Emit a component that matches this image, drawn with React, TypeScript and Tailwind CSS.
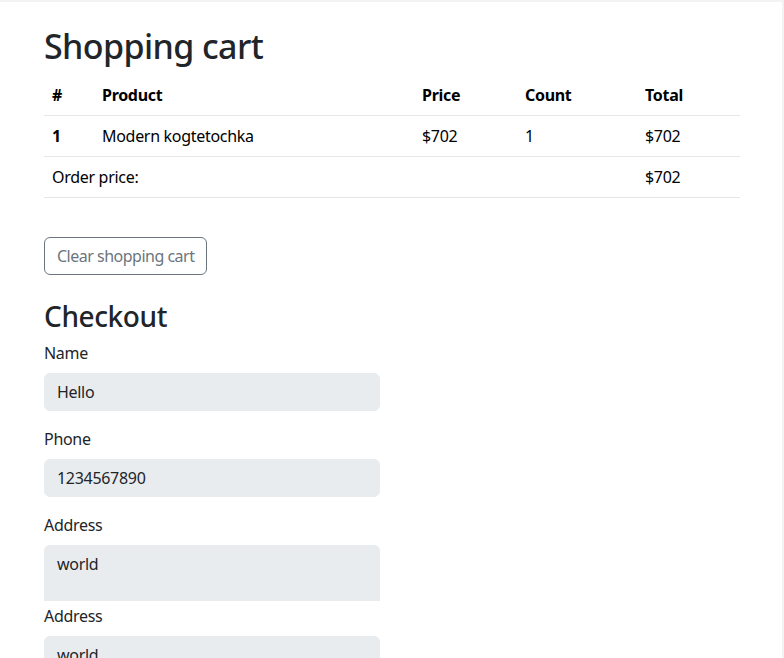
import React from "react";

export default function App() {
  const font = "font-['Noto_Sans',sans-serif]";
  return (
    <div className={`min-h-[658px] w-full border-t-2 border-r-2 border-[#f3f3f3] bg-white text-[#212529] ${font}`}>
      <div className="ml-[44px] w-[696px]">
        <h1 className="mt-[24px] mb-[8px] text-[34px] leading-[41px] font-medium tracking-[-0.6px]">Shopping cart</h1>
        <table className="w-[696px] table-fixed border-collapse text-[16px] leading-6 tracking-[-0.3px]">
          <colgroup>
            <col className="w-[50px]" />
            <col className="w-[320px]" />
            <col className="w-[103px]" />
            <col className="w-[120px]" />
            <col className="w-[103px]" />
          </colgroup>
          <thead>
            <tr className="border-b border-[#e5e7ea]">
              <th className="px-2 py-2 text-left font-bold text-black">#</th>
              <th className="px-2 py-2 text-left font-bold text-black">Product</th>
              <th className="px-2 py-2 text-left font-bold text-black">Price</th>
              <th className="px-2 py-2 text-left font-bold text-black">Count</th>
              <th className="px-2 py-2 text-left font-bold text-black">Total</th>
            </tr>
          </thead>
          <tbody>
            <tr className="border-b border-[#e5e7ea]">
              <td className="px-2 py-2 font-bold text-black">1</td>
              <td className="px-2 py-2 text-black">Modern kogtetochka</td>
              <td className="px-2 py-2 text-black">$702</td>
              <td className="px-2 py-2 text-black">1</td>
              <td className="px-2 py-2 text-black">$702</td>
            </tr>
            <tr className="border-b border-[#e5e7ea]">
              <td colSpan={4} className="px-2 py-2 text-black">Order price:</td>
              <td className="px-2 py-2 text-black">$702</td>
            </tr>
          </tbody>
        </table>
        <div className="mt-[39px]">
          <button className="h-[38px] rounded-[6px] border border-[#6c757d] px-3 text-[16px] leading-6 text-[#6c757d] tracking-[-0.5px]">
            Clear shopping cart
          </button>
        </div>
        <h2 className="mt-[24px] mb-[8px] text-[28px] leading-[34px] font-medium tracking-[-0.4px]">Checkout</h2>
        <div className="w-[336px] text-[16px] leading-6 tracking-[-0.3px]">
          <div className="mb-4">
            <label className="mb-2 block">Name</label>
            <div className="h-[38px] rounded-[6px] border border-[#e9ecef] bg-[#e9ecef] px-3 py-[6px]">Hello</div>
          </div>
          <div className="mb-4">
            <label className="mb-2 block">Phone</label>
            <div className="h-[38px] rounded-[6px] border border-[#e9ecef] bg-[#e9ecef] px-3 py-[6px]">1234567890</div>
          </div>
          <div>
            <label className="mb-2 block">Address</label>
            <div className="h-[56px] rounded-t-[6px] border border-b-0 border-[#e9ecef] bg-[#e9ecef] px-3 py-[6px]">world</div>
          </div>
          <div className="mt-[3px]">
            <label className="mb-2 block">Address</label>
            <div className="h-[56px] rounded-t-[6px] border border-b-0 border-[#e9ecef] bg-[#e9ecef] px-3 py-[6px]">world</div>
          </div>
        </div>
      </div>
    </div>
  );
}
